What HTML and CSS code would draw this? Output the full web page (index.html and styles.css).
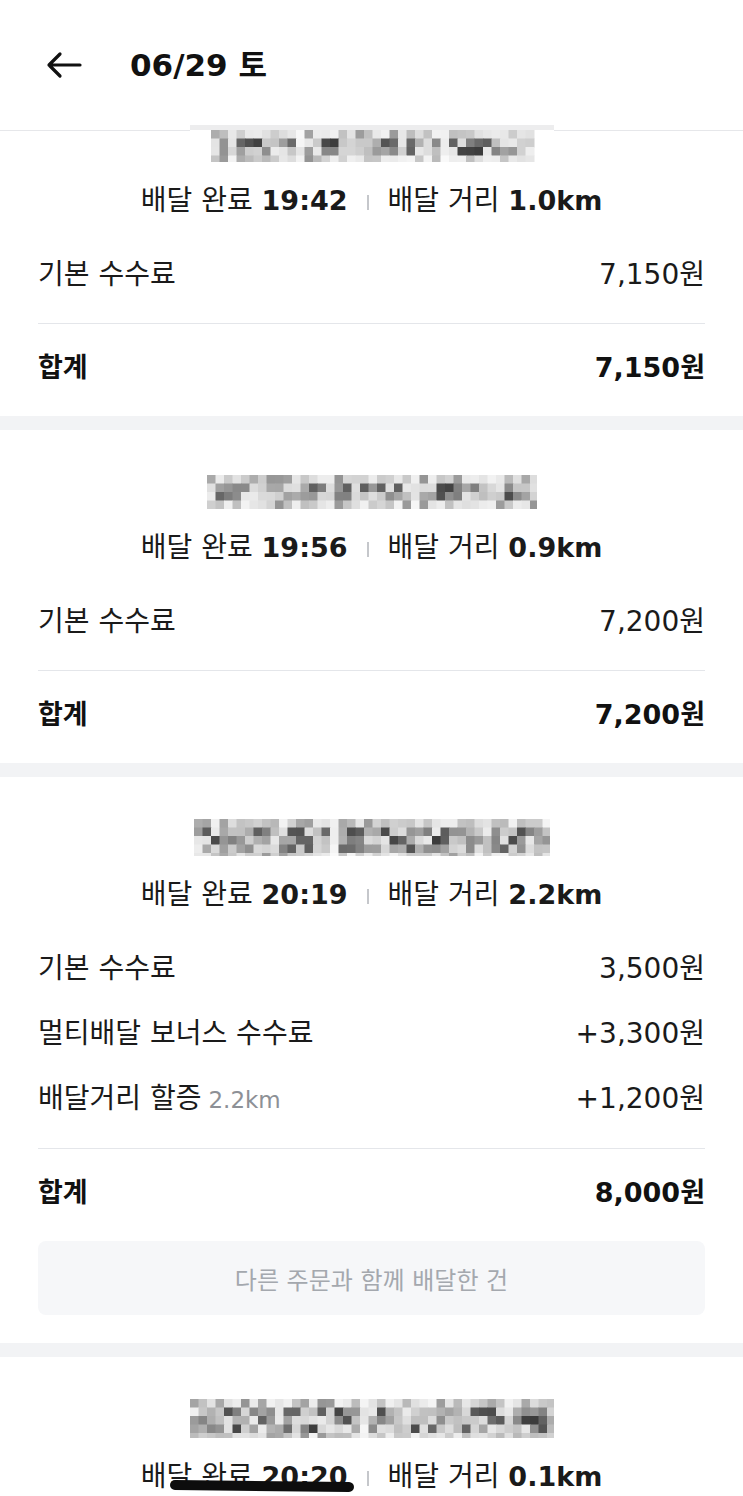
FILE: index.html
```html
<!doctype html>
<html lang="ko">
<head>
    <meta charset="UTF-8">
    <meta name="viewport" content="width=device-width, initial-scale=1.0">
    <title>06/29 토</title>
    <link rel="stylesheet" href="styles.css">
</head>
<body>
    <header class="top">
        <svg class="back" width="36" height="28" viewBox="0 0 36 28">
            <path d="M34 14H3M14 3L3 14l11 11" fill="none" stroke="#111" stroke-width="3.2" stroke-linecap="round" stroke-linejoin="round"/>
        </svg>
        <h1 class="title">06/29 토</h1>
    </header>

    <section class="order order-first">
        <canvas class="mosaic" width="364" height="37" data-seed="7" data-gaps="10,27" data-band="21"></canvas>
        <p class="meta">배달 완료 <b>19:42</b><i class="bar"></i>배달 거리 <b>1.0km</b></p>
        <ul class="fees">
            <li><span>기본 수수료</span><span>7,150원</span></li>
        </ul>
        <div class="total"><span>합계</span><span>7,150원</span></div>
    </section>

    <section class="order">
        <canvas class="mosaic" width="330" height="34" data-seed="21" data-gaps="24"></canvas>
        <p class="meta">배달 완료 <b>19:56</b><i class="bar"></i>배달 거리 <b>0.9km</b></p>
        <ul class="fees">
            <li><span>기본 수수료</span><span>7,200원</span></li>
        </ul>
        <div class="total"><span>합계</span><span>7,200원</span></div>
    </section>

    <section class="order">
        <canvas class="mosaic mosaic-tall" width="356" height="37" data-seed="45" data-gaps="16"></canvas>
        <p class="meta">배달 완료 <b>20:19</b><i class="bar"></i>배달 거리 <b>2.2km</b></p>
        <ul class="fees">
            <li><span>기본 수수료</span><span>3,500원</span></li>
            <li><span>멀티배달 보너스 수수료</span><span>+3,300원</span></li>
            <li><span>배달거리 할증<em class="note">2.2km</em></span><span>+1,200원</span></li>
        </ul>
        <div class="total"><span>합계</span><span>8,000원</span></div>
        <button class="together">다른 주문과 함께 배달한 건</button>
    </section>

    <section class="order">
        <canvas class="mosaic mosaic-tall" width="364" height="39" data-seed="88" data-gaps="20"></canvas>
        <p class="meta">배달 완료 <b>20:20</b><i class="bar"></i>배달 거리 <b>0.1km</b><i class="scribble"></i></p>
    </section>

    <script src="mosaic.js"></script>
</body>
</html>
```

FILE: styles.css
```css
*{
    padding:0;
    margin:0;
}
li{
    list-style:none;
}
body{
    background:#fff;
    color:#1a1a1a;
    font-family:"DejaVu Sans","Noto Sans CJK KR",sans-serif;
    overflow:hidden;
}
.top{
    display:flex;
    align-items:center;
    height:130px;
    padding-left:46px;
    border-bottom:1px solid #e6e7ea;
}
.top .back{
    display:block;
}
.top .title{
    margin-left:48px;
    font-size:31px;
    font-weight:700;
    line-height:40px;
    color:#111;
}
.order{
    padding:45px 38px 28px;
    border-bottom:14px solid #f2f3f5;
}
.order-first{
    padding-top:0;
}
.mosaic{
    display:block;
    margin:0 auto;
}
.order-first .mosaic{
    margin-top:-6px;
}
.mosaic-tall{
    margin-top:-3px;
}
.meta{
    position:relative;
    margin:19px -38px 0;
    text-align:center;
    font-size:28px;
    line-height:40px;
    color:#1a1a1a;
}
.meta b{
    font-size:27px;
    font-weight:700;
}
.meta .bar{
    display:inline-block;
    width:2px;
    height:15px;
    margin:0 19px;
    background:#c5c7cb;
    vertical-align:middle;
}
.meta .scribble{
    position:absolute;
    left:170px;
    top:24px;
    width:184px;
    height:10px;
    border-radius:5px;
    background:#0d0d0d;
    transform:rotate(0.6deg);
}
.fees{
    margin-top:34px;
}
.fees li{
    display:flex;
    justify-content:space-between;
    font-size:28px;
    line-height:40px;
}
.fees li + li{
    margin-top:25px;
}
.fees .note{
    margin-left:7px;
    font-style:normal;
    font-size:23px;
    color:#8d9096;
}
.total{
    display:flex;
    justify-content:space-between;
    margin-top:28px;
    padding-top:24px;
    border-top:1px solid #e4e6ea;
    font-size:27px;
    font-weight:700;
    line-height:40px;
    color:#111;
}
.together{
    display:block;
    width:100%;
    height:74px;
    margin-top:28px;
    border:none;
    border-radius:8px;
    background:#f6f7f9;
    color:#a4a8ae;
    font-family:inherit;
    font-size:24px;
}
```

FILE: mosaic.js
```js
var oMosaic = document.querySelectorAll(".mosaic");

function seeded(seed){
    return function(){
        seed = (seed * 16807) % 2147483647;
        return (seed - 1) / 2147483646;
    };
}

function paint(c){
    var ctx = c.getContext("2d");
    var rand = seeded(+c.dataset.seed);
    var gaps = (c.dataset.gaps || "").split(",");
    var band = +(c.dataset.band || 0);
    var offY = band ? 5 : 0;
    var size = 8.5;
    var cols = Math.ceil((c.width - band * 2) / size);
    var rows = Math.ceil((c.height - offY) / size);
    ctx.fillStyle = "#fff";
    ctx.fillRect(0, 0, c.width, c.height);
    // light strip on top of the first blur
    if(band){
        ctx.fillStyle = "#ededee";
        ctx.fillRect(0, 0, c.width, offY);
    }
    for(var y = 0; y < rows; y++){
        for(var x = 0; x < cols; x++){
            var v, t = rand();
            if(gaps.indexOf(String(x)) > -1){
                v = 225 + rand() * 22;
            }else if(t < 0.16){
                v = 60 + rand() * 50;
            }else if(t < 0.55){
                v = 125 + rand() * 55;
            }else{
                v = 190 + rand() * 45;
            }
            // the edges of the blur are paler
            if(y == 0 || y == rows - 1 || x == 0 || x == cols - 1){
                v = v + (255 - v) * 0.45;
            }
            v = Math.round(v);
            ctx.fillStyle = "rgb(" + v + "," + v + "," + v + ")";
            ctx.fillRect(band + x * size, offY + y * size, size + 0.5, size + 0.5);
        }
    }
}

for(var i = 0; i < oMosaic.length; i++){
    paint(oMosaic[i]);
}
```
